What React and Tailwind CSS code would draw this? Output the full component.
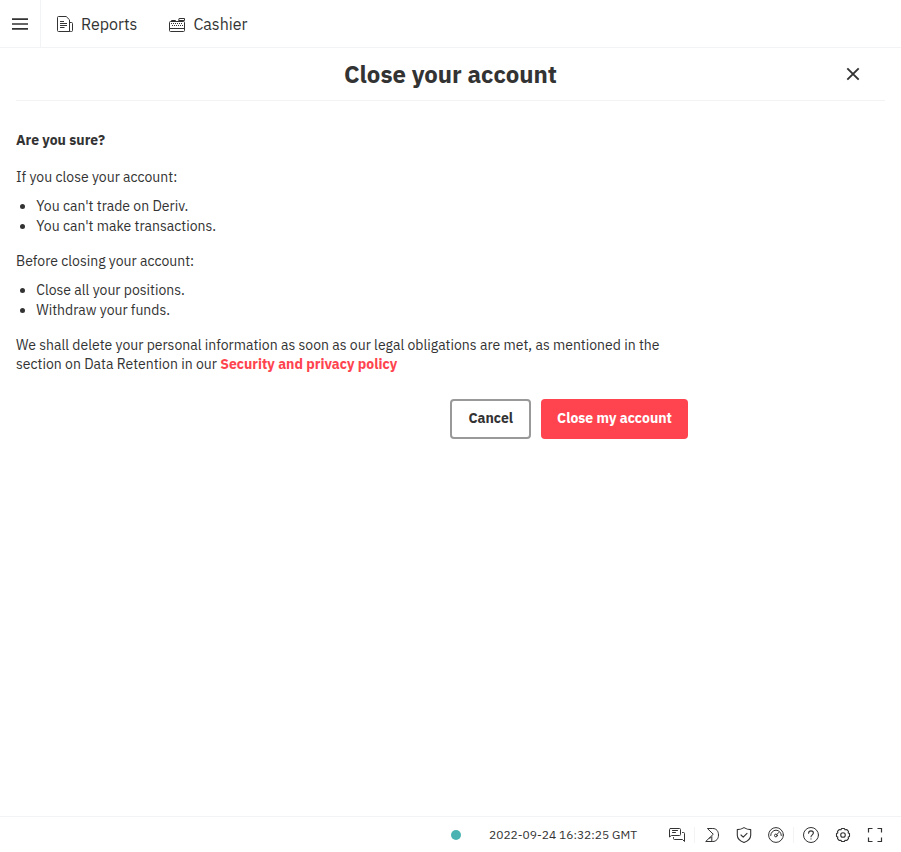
import React from 'react';

const Svg = ({ children, className = '' }) => (
  <svg className={`block shrink-0 ${className}`} width="16" height="16" viewBox="0 0 16 16" fill="none" stroke="#333" strokeLinecap="round" strokeLinejoin="round">
    {children}
  </svg>
);

const MenuIcon = () => (
  <svg className="block" width="16" height="16" viewBox="0 0 16 16" fill="#333">
    <path d="M0 2.300h16v1.700H0zM0 7.150h16v1.700H0zM0 12h16v1.700H0z" />
  </svg>
);

const ReportsIcon = () => (
  <Svg>
    <path d="M12.500 15.500h-11a1 1 0 0 1-1-1v-13a1 1 0 0 1 1-1h7.700l3.300 3.300v10.700M12.500 6.500h2a1 1 0 0 1 1 1v7a1 1 0 0 1-1 1h-1a1 1 0 0 1-1-1" />
    <path d="M3 5.500h4M3 7.500h7M3 9.500h7M3 11.500h4.500" strokeLinecap="butt" />
  </Svg>
);

const CashierIcon = () => (
  <Svg>
    <path d="M.5 12.500V6.500a1 1 0 0 1 1-1h13a1 1 0 0 1 1 1v8a1 1 0 0 1-1 1h-13a1 1 0 0 1-1-1v-2h15M2.500 5.500v-1h4v1M12.500 5.500v-1M10.500 2.500h5v2h-5.500z" />
    <path d="M2 7.500h12M3 9.500h11" strokeDasharray="1 1" strokeLinecap="butt" />
  </Svg>
);

const ChatIcon = () => (
  <Svg>
    <path d="M1.500 1.500h9a1 1 0 0 1 1 1v5a1 1 0 0 1-1 1h-8l-2 1.500V2.500a1 1 0 0 1 1-1zM3.500 3.500h5M3.500 5.500h3M13.500 5.500h1a1 1 0 0 1 1 1v8l-2-2h-8a1 1 0 0 1-1-1v-1" />
  </Svg>
);

const DerivIcon = () => (
  <Svg>
    <path d="M3.800 1.500h5c3.600 0 5.700 2.700 5.700 6.500s-2.300 6.500-5.700 6.500H1.700L9 7.500zM5.200 11.200c1.200-.3 2-.8 2.600-1.500v4.800" />
  </Svg>
);

const ShieldIcon = () => (
  <Svg>
    <path d="M8 .6c2 1.300 4.200 2 6.700 2v5.700c0 3.300-2.700 5.700-6.700 7.200-4-1.500-6.700-3.900-6.700-7.200V2.600C3.800 2.600 6 1.900 8 .6zM5 8l2.200 2.200L11 6.300" strokeWidth="1.100" />
  </Svg>
);

const GaugeIcon = () => (
  <Svg>
    <circle cx="8" cy="8" r="7.400" />
    <path d="M2.700 8.500a5.300 5.300 0 0 1 10.600 0M8.900 7.400l1.700-1.700" />
    <circle cx="7.900" cy="8.500" r="1.400" />
  </Svg>
);

const HelpIcon = () => (
  <Svg>
    <circle cx="8" cy="8" r="7.500" />
    <path d="M5.600 6.200A2.400 2.400 0 0 1 8 3.900c1.400 0 2.400.9 2.400 2.200C10.400 7.800 8 7.900 8 9.800M8 11.700v.3" strokeWidth="1.100" />
  </Svg>
);

const SettingsIcon = () => (
  <Svg>
    <path d="M6.600 1.500h2.800l.6 1.300 1.700-.3 1.800 1.800-.3 1.600 1.300.7v2.800l-1.300.7.3 1.600-1.800 1.800-1.700-.3-.6 1.300H6.600L6 13.200l-1.700.3-1.800-1.800.3-1.600-1.300-.7V6.600l1.300-.7-.3-1.600 1.800-1.800 1.700.3z" strokeWidth="1.100" />
    <circle cx="8" cy="8" r="2.300" strokeWidth="1.100" />
  </Svg>
);

const FullscreenIcon = () => (
  <Svg>
    <path d="M1.500 5.500v-4h4M10.500 1.500h4v4M14.500 10.500v4h-4M5.500 14.500h-4v-4" strokeLinecap="butt" strokeLinejoin="miter" strokeWidth="1.200" />
  </Svg>
);

export default function App() {
  return (
    <div className="flex h-screen flex-col overflow-hidden whitespace-nowrap bg-white font-['IBM_Plex_Sans',Roboto,sans-serif] text-sm text-[#333]">
      <header className="flex h-12 shrink-0 items-center border-b border-[#f2f3f4]">
        <button className="flex h-full w-[41px] items-center justify-center border-r border-[#f2f3f4]" aria-label="Menu"><MenuIcon /></button>
        <nav className="flex items-center pl-4 text-base">
          <a className="flex w-28 items-center gap-2"><ReportsIcon /><span>Reports</span></a>
          <a className="flex items-center gap-[8.400px]"><CashierIcon /><span>Cashier</span></a>
        </nav>
      </header>

      <main className="flex min-h-0 flex-1 flex-col px-4">
        <div className="grid h-[53px] shrink-0 grid-cols-[1fr_auto_1fr] items-center border-b border-[#f2f3f4]">
          <h1 className="col-start-2 text-2xl font-bold">Close your account</h1>
          <button className="mr-6 justify-self-end" aria-label="Close">
            <svg className="block" width="16" height="16" viewBox="0 0 16 16" fill="none" stroke="#333" strokeWidth="1.900"><path d="m2.300 2.300 11.400 11.400M13.700 2.300 2.300 13.700" /></svg>
          </button>
        </div>

        <section className="w-[672px] pt-[29px] leading-5">
          <h2 className="font-bold">Are you sure?</h2>
          <p className="mt-[17px]">If you close your account:</p>
          <ul className="mt-[9px] list-disc pl-[20.200px]">
            <li>You can't trade on Deriv.</li>
            <li>You can't make transactions.</li>
          </ul>
          <p className="mt-[15px]">Before closing your account:</p>
          <ul className="mt-[9px] list-disc pl-[20.200px]">
            <li>Close all your positions.</li>
            <li>Withdraw your funds.</li>
          </ul>
          <p className="mt-4 leading-[19px]">
            We shall delete your personal information as soon as our legal obligations are met, as mentioned in the<br />
            section on Data Retention in our <a className="font-bold text-[#ff444f]">Security and privacy policy</a>
          </p>
          <div className="mt-[25px] flex justify-end gap-2.5">
            <button className="h-10 w-[81px] rounded border-2 border-[#999] pb-0.5 pl-[0.500px] font-bold">Cancel</button>
            <button className="h-10 w-[147px] rounded bg-[#ff444f] pb-0.5 font-bold text-white">Close my account</button>
          </div>
        </section>
      </main>

      <footer className="flex h-9 shrink-0 items-center justify-end border-t border-[#f2f3f4] pr-[18px]">
        <span className="mr-7 h-2.5 w-2.5 rounded-full bg-[#4bb4b3]" />
        <time className="w-[180px] text-xs">2022-09-24 16:32:25 GMT</time>
        <ChatIcon />
        <i className="ml-[9px] h-4 w-px bg-[#f2f3f4]" />
        <div className="ml-[9px] flex gap-4"><DerivIcon /><ShieldIcon /><GaugeIcon /></div>
        <i className="ml-[9px] h-4 w-px bg-[#f2f3f4]" />
        <div className="ml-[9px] flex gap-4"><HelpIcon /><SettingsIcon /><FullscreenIcon /></div>
      </footer>
    </div>
  );
}
